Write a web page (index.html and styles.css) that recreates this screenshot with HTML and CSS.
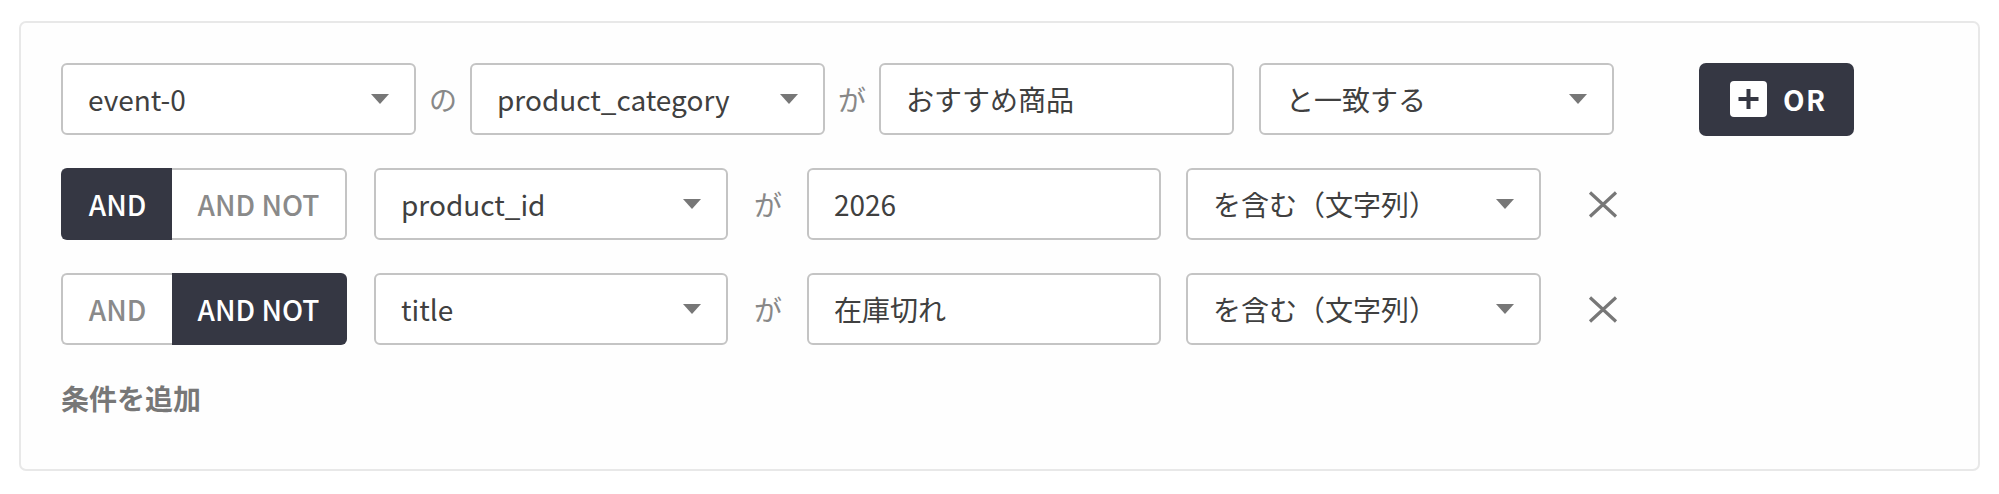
FILE: index.html
```html
<!DOCTYPE html>
<html lang="ja">
<head>
<meta charset="utf-8">
<link rel="stylesheet" href="styles.css">
</head>
<body>
<div class="card">
  <div class="row">
    <div class="field select">event-0<span class="caret"></span></div>
    <span class="conj conj-tight">の</span>
    <div class="field select">product_category<span class="caret"></span></div>
    <span class="conj conj-tight">が</span>
    <div class="field input">おすすめ商品</div>
    <div class="field select gap-s">と一致する<span class="caret"></span></div>
    <button class="or-btn">
      <svg class="plus" viewBox="0 0 37 36" width="37" height="36"><rect x="0" y="0" width="37" height="36" rx="4" fill="#fff"/><path d="M18.5 8v20M8.5 18h20" stroke="#353743" stroke-width="4" stroke-linecap="butt"/></svg>
      <span>OR</span>
    </button>
  </div>
  <div class="row">
    <div class="toggle"><span class="seg seg-and active">AND</span><span class="seg seg-not">AND NOT</span></div>
    <div class="field select narrow gap-t">product_id<span class="caret"></span></div>
    <span class="conj conj-wide">が</span>
    <div class="field input narrow">2026</div>
    <div class="field select gap-s">を含む（文字列）<span class="caret"></span></div>
    <svg class="close" viewBox="0 0 30 27" width="30" height="27"><path d="M2 1.5L28 25.5M28 1.5L2 25.5" stroke="#777" stroke-width="3.2"/></svg>
  </div>
  <div class="row">
    <div class="toggle"><span class="seg seg-and">AND</span><span class="seg seg-not active">AND NOT</span></div>
    <div class="field select narrow gap-t">title<span class="caret"></span></div>
    <span class="conj conj-wide">が</span>
    <div class="field input narrow">在庫切れ</div>
    <div class="field select gap-s">を含む（文字列）<span class="caret"></span></div>
    <svg class="close" viewBox="0 0 30 27" width="30" height="27"><path d="M2 1.5L28 25.5M28 1.5L2 25.5" stroke="#777" stroke-width="3.2"/></svg>
  </div>
  <div class="add">条件を追加</div>
</div>
</body>
</html>
```

FILE: styles.css
```css
* { box-sizing: border-box; }
html, body { margin: 0; padding: 0; background: #ffffff; }
body {
  font-family: "Noto Sans CJK JP", "Noto Sans", sans-serif;
  font-size: 28px;
  color: #444;
}
.card {
  margin: 21px 19px 0;
  height: 450px;
  border: 2px solid #e8e8e8;
  border-radius: 7px;
  background: #fefefe;
  padding: 40px 40px 0;
}
.row {
  display: flex;
  align-items: center;
  height: 72px;
  margin-bottom: 33px;
}
.field {
  height: 72px;
  width: 355px;
  border: 2px solid #c4c4c4;
  border-radius: 6px;
  background: #fff;
  display: flex;
  align-items: center;
  padding: 0 25px;
  color: #404040;
  white-space: nowrap;
}
.field.narrow { width: 354px; }
.select { justify-content: space-between; }
.caret {
  width: 0; height: 0;
  border-left: 9px solid transparent;
  border-right: 9px solid transparent;
  border-top: 10px solid #777;
}
.gap-s { margin-left: 25px; }
.gap-t { margin-left: 27px; }
.conj {
  color: #888;
  width: 28px;
  text-align: center;
  flex: none;
}
.conj-tight { margin: 0 13px; }
.conj-wide { margin: 0 25px 0 26px; }
.or-btn {
  margin-left: 85px;
  height: 73px;
  width: 155px;
  background: #353743;
  border: none;
  border-radius: 7px;
  color: #fff;
  display: flex;
  align-items: center;
  padding: 0 0 0 31px;
  font-family: inherit;
  font-size: 28px;
  font-weight: 600;
  letter-spacing: 1.5px;
}
.or-btn .plus { margin-right: 16px; flex: none; }
.toggle {
  display: flex;
  height: 72px;
  width: 286px;
  flex: none;
}
.seg {
  display: flex;
  align-items: center;
  justify-content: center;
  height: 72px;
  border: 2px solid #c4c4c4;
  color: #8a8a8a;
  font-weight: 500;
  background: #fff;
}
.seg-and { width: 111px; border-radius: 6px 0 0 6px; border-right: none; }
.seg-not { width: 175px; border-radius: 0 6px 6px 0; border-left: none; }
.seg.active { background: #353743; border-color: #353743; color: #fff; }
.close { margin-left: 47px; flex: none; }
.add {
  margin-top: 21px;
  line-height: 40px;
  color: #777;
  font-weight: 700;
}
```
